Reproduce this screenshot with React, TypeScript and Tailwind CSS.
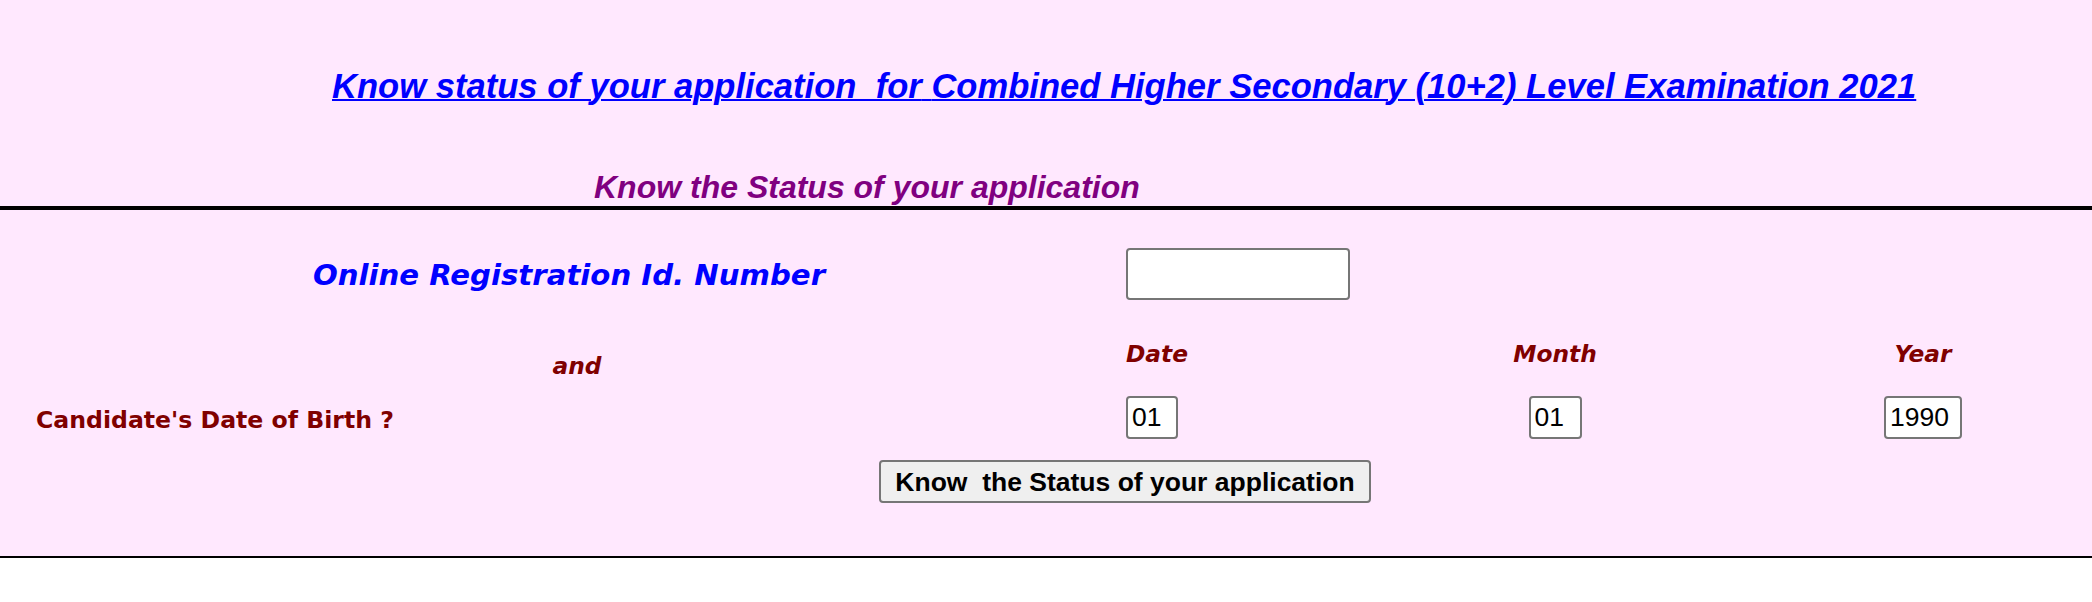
export default function App() {
  return (
    <div className="w-full min-h-[602px] bg-white font-['Liberation_Sans',Arial,sans-serif]">
      {/* heading */}
      <div className="h-[206px] bg-[#ffe8fe]">
        <div className="pl-[332px] pt-[66px] text-[34.6px] leading-[40px] font-bold italic whitespace-pre">
          <a
            href="#"
            className="text-[#0000ff] underline decoration-2 decoration-[#0000ff]"
          >
            Know status of your application  for{" "}
            <span className="decoration-[#9933ff]">
              Combined Higher Secondary (10+2) Level Examination 2021
            </span>
          </a>
        </div>
        <div className="pl-[594px] pt-[63px] text-[32px] leading-[36px] font-bold italic text-[#800080]">
          Know the Status of your application
        </div>
      </div>

      {/* form table */}
      <div className="border-t-4 border-b-2 border-black bg-[#ffe8fe]">
        <div className="grid grid-cols-[1126px_214px_430px_306px] grid-rows-[128px_40px_78px_100px] font-['DejaVu_Sans',Verdana,sans-serif] font-bold text-[23.3px] leading-[28px] text-[#800000]">
          {/* registration id */}
          <div className="self-center pt-[2px] pl-[12px] text-center text-[29.2px] leading-[34px] italic text-[#0000ff]">
            Online Registration Id. Number
          </div>
          <div className="col-span-3 self-center">
            <input
              type="text"
              className="h-[52px] w-[224px] rounded-[4px] border-2 border-[#767676] bg-white px-1 font-['Liberation_Sans',Arial,sans-serif] text-[26.5px] font-normal text-black"
            />
          </div>

          {/* labels */}
          <div className="pt-[14px] pl-[28px] text-center italic">and</div>
          <div className="pt-[2px] italic">Date</div>
          <div className="pt-[2px] text-center italic">Month</div>
          <div className="pt-[2px] text-center italic">Year</div>

          {/* date of birth */}
          <div className="self-center pt-[5px] pl-[36px] text-[23.6px]">
            Candidate's Date of Birth ?
          </div>
          <div className="self-center">
            <input
              type="text"
              defaultValue="01"
              className="h-[43px] w-[52px] rounded-[4px] border-2 border-[#767676] bg-white px-[4px] font-['Liberation_Sans',Arial,sans-serif] text-[26.5px] font-normal text-black"
            />
          </div>
          <div className="self-center flex justify-center">
            <input
              type="text"
              defaultValue="01"
              className="h-[43px] w-[53px] rounded-[4px] border-2 border-[#767676] bg-white px-[4px] font-['Liberation_Sans',Arial,sans-serif] text-[26.5px] font-normal text-black"
            />
          </div>
          <div className="self-center flex justify-center">
            <input
              type="text"
              defaultValue="1990"
              className="h-[43px] w-[78px] rounded-[4px] border-2 border-[#767676] bg-white px-[4px] font-['Liberation_Sans',Arial,sans-serif] text-[26.5px] font-normal text-black"
            />
          </div>

          {/* submit */}
          <div className="col-span-4 pt-[4px] pl-[879px]">
            <button
              type="button"
              className="h-[43px] w-[492px] rounded-[4px] border-2 border-[#767676] bg-[#efefef] font-['Liberation_Sans',Arial,sans-serif] text-[26.5px] font-bold text-black whitespace-pre"
            >
              Know  the Status of your application
            </button>
          </div>
        </div>
      </div>
    </div>
  );
}
